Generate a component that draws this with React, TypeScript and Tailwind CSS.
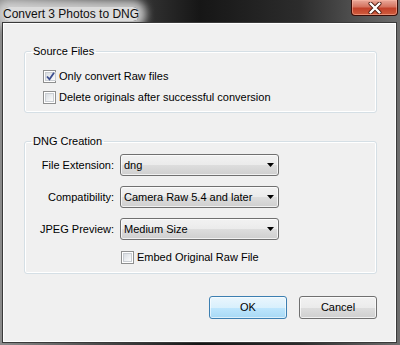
import React from 'react';

const ui = { fontFamily: '"Segoe UI", "Liberation Sans", Arial, sans-serif' };

function CheckBox({ checked, label }: { checked?: boolean; label: string }) {
    return (
        <label className="flex items-center gap-[3px] h-[21px] text-[11px] text-black">
            <span className="w-[13px] h-[13px] border border-[#8e8f8f] bg-white p-[1px] flex">
                <span className="flex-1 border border-[#c9cdd2] bg-[linear-gradient(135deg,#d9dde2_0%,#eef0f2_60%,#fbfbfb_100%)] flex items-center justify-center">
                    {checked && (
                        <svg width="9" height="9" viewBox="0 0 9 9">
                            <path d="M1 4.5 L3.5 7.3 L8 0.8" fill="none" stroke="#3c4e8f" strokeWidth="1.8" />
                        </svg>
                    )}
                </span>
            </span>
            <span>{label}</span>
        </label>
    );
}

function Combo({ value }: { value: string }) {
    return (
        <div className="w-[159px] h-[22px] rounded-[3px] border border-[#707070] bg-[linear-gradient(180deg,#f2f2f2_0%,#ebebeb_50%,#dddddd_51%,#cfcfcf_100%)] shadow-[inset_0_0_0_1px_rgba(255,255,255,0.7)] flex items-center pl-[3px] pr-[4px] text-[11px] text-black">
            <span className="flex-1">{value}</span>
            <svg width="7" height="4" viewBox="0 0 7 4">
                <path d="M0 0 H7 L3.5 4 Z" fill="#000" />
            </svg>
        </div>
    );
}

function Row({ label, value }: { label: string; value: string }) {
    return (
        <div className="flex items-center h-[22px]">
            <span className="w-[89px] text-right text-[11px] text-black">{label}</span>
            <span className="w-[6px]" />
            <Combo value={value} />
        </div>
    );
}

export default function App() {
    return (
        <div style={ui} className="w-[400px] h-[345px] flex flex-col bg-[linear-gradient(90deg,#8c8c8c_0%,#4a4a4a_25%,#161616_50%,#2c2c2c_75%,#6e6e6e_100%)] overflow-hidden">
            {/* title bar */}
            <div className="h-[22px] flex items-start justify-between">
                <div className="pl-[3px] pt-[1px]">
                    <span className="text-[12px] leading-[15px] text-[#101010] bg-[#dcdcdc] shadow-[0_0_8px_7px_rgba(220,220,220,0.85)] rounded-[6px]">
                        Convert 3 Photos to DNG
                    </span>
                </div>
                <div className="mr-[2px] w-[47px] h-[16px] rounded-b-[4px] border border-t-0 border-[#3b0c06] bg-[linear-gradient(180deg,#e9a99b_0%,#d5735f_45%,#c2412a_55%,#cf5c3d_100%)] shadow-[inset_0_0_0_1px_rgba(255,190,170,0.5)] flex items-center justify-center">
                    <svg width="14" height="12" viewBox="0 0 14 12">
                        <path d="M2.5 1.5 L11.5 10.5 M11.5 1.5 L2.5 10.5" stroke="#4a1a10" strokeWidth="4" strokeLinecap="round" />
                        <path d="M2.5 1.5 L11.5 10.5 M11.5 1.5 L2.5 10.5" stroke="#ffffff" strokeWidth="2.4" strokeLinecap="round" />
                    </svg>
                </div>
            </div>

            {/* content */}
            <div className="ml-[2px] mr-[3px] mb-[2px] flex-1 border border-[#3a3a3a] bg-[#f0f0f0] shadow-[inset_0_0_0_1px_#ffffff] flex flex-col pt-[21px] pl-[21px] pr-[19px]">
                <fieldset className="border border-[#d5dfe5] rounded-[3px] shadow-[inset_0_0_0_1px_#ffffff] pt-[8px] pb-[4px]">
                    <legend className="ml-[6px] px-[2px] text-[11px] leading-[14px] text-black">Source Files</legend>
                    <div className="pl-[18px]">
                        <CheckBox checked label="Only convert Raw files" />
                        <CheckBox label="Delete originals after successful conversion" />
                    </div>
                </fieldset>

                <fieldset className="mt-[21px] border border-[#d5dfe5] rounded-[3px] shadow-[inset_0_0_0_1px_#ffffff] pt-[6px] pb-[5px]">
                    <legend className="ml-[6px] px-[2px] text-[11px] leading-[14px] text-black">DNG Creation</legend>
                    <div className="flex flex-col gap-[10px]">
                        <Row label="File Extension:" value="dng" />
                        <Row label="Compatibility:" value="Camera Raw 5.4 and later" />
                        <Row label="JPEG Preview:" value="Medium Size" />
                    </div>
                    <div className="mt-[7px] pl-[96px]">
                        <CheckBox label="Embed Original Raw File" />
                    </div>
                </fieldset>

                <div className="mt-[22px] flex justify-end gap-[12px]">
                    <button className="w-[78px] h-[23px] rounded-[3px] border border-[#3c7fb1] bg-[linear-gradient(180deg,#eaf6fd_0%,#d9f0fc_50%,#bee6fd_51%,#a7d9f5_100%)] shadow-[inset_0_0_0_1px_rgba(255,255,255,0.6)] text-[11px] text-black">
                        OK
                    </button>
                    <button className="w-[78px] h-[23px] rounded-[3px] border border-[#707070] bg-[linear-gradient(180deg,#f2f2f2_0%,#ebebeb_50%,#dddddd_51%,#cfcfcf_100%)] shadow-[inset_0_0_0_1px_rgba(255,255,255,0.7)] text-[11px] text-black">
                        Cancel
                    </button>
                </div>
            </div>
        </div>
    );
}
